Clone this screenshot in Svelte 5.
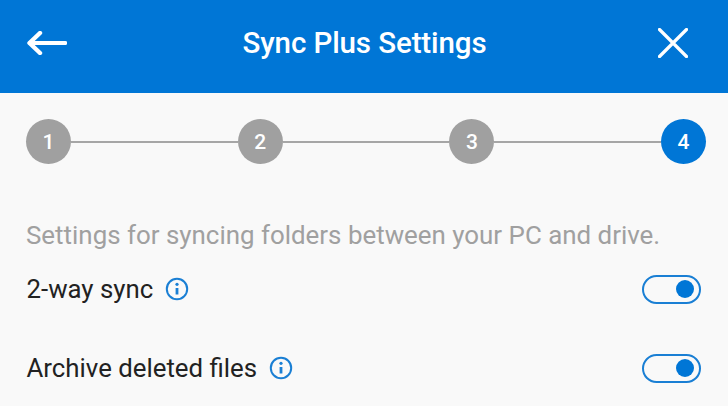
<script>
	const steps = [1, 2, 3, 4];
	const current = 4;
	const options = [
		{ label: "2-way sync", on: true },
		{ label: "Archive deleted files", on: true }
	];
</script>

<div class="panel">
	<header class="topbar">
		<button class="icon-btn" aria-label="Back">
			<svg viewBox="0 0 40 24" width="40" height="24" fill="none" stroke="#fff" stroke-width="3.8" stroke-linecap="round" stroke-linejoin="round">
				<path d="M3 12H38.5" />
				<path d="M13 2 2.5 12 13 22" stroke-width="4.4" />
			</svg>
		</button>
		<h1>Sync Plus Settings</h1>
		<button class="icon-btn" aria-label="Close">
			<svg viewBox="0 0 30 30" width="30" height="30" fill="none" stroke="#fff" stroke-width="3.2" stroke-linecap="round">
				<path d="M1.5 1.5 28.5 28.5M28.5 1.5 1.5 28.5" />
			</svg>
		</button>
	</header>

	<div class="stepper">
		{#each steps as step, i}
			{#if i > 0}<span class="line"></span>{/if}
			<span class="step" class:active={step === current}>{step}</span>
		{/each}
	</div>

	<p class="intro">Settings for syncing folders between your PC and drive.</p>

	<div class="options">
		{#each options as option}
			<div class="row">
				<span class="label">{option.label}</span>
				<svg class="info" viewBox="0 0 24 24" width="24" height="24" fill="none" stroke="#1a7fd4">
					<circle cx="12" cy="12" r="10.2" stroke-width="2" />
					<path d="M12 11v6.5" stroke-width="2.8" />
					<circle cx="12" cy="7.3" r="1.6" fill="#1a7fd4" stroke="none" />
				</svg>
				<span class="toggle" class:on={option.on}><span class="knob"></span></span>
			</div>
		{/each}
	</div>
</div>

<style>
	:global(body) {
		margin: 0;
		background: #f9f9f9;
	}

	.panel {
		width: 728px;
		height: 406px;
		overflow: hidden;
		background: #f9f9f9;
		font-family: Roboto, "Liberation Sans", sans-serif;
	}

	.topbar {
		height: 93px;
		box-sizing: border-box;
		padding: 0 40px 7px 27px;
		background: #0076d6;
		display: flex;
		align-items: center;
		justify-content: space-between;
	}
	.topbar h1 {
		margin: 0;
		padding-left: 4px;
		color: #fff;
		font-size: 29.5px;
		font-weight: 500;
		letter-spacing: -0.1px;
	}

	.icon-btn {
		padding: 0;
		background: none;
		border: none;
		display: flex;
	}

	.stepper {
		display: flex;
		align-items: center;
		padding: 26px 22px 0 26px;
	}
	.step {
		width: 45px;
		height: 45px;
		flex: none;
		border-radius: 50%;
		background: #a0a0a0;
		color: #fff;
		font-size: 21px;
		font-weight: 500;
		display: flex;
		align-items: center;
		justify-content: center;
	}
	.step.active {
		background: #0076d6;
	}
	.line {
		flex: 1;
		height: 2px;
		background: #a6a6a6;
	}

	.intro {
		margin: 0;
		padding: 56px 0 0 26px;
		color: #a0a0a0;
		font-size: 25.9px;
		line-height: 30px;
	}

	.options {
		display: flex;
		flex-direction: column;
		gap: 49px;
		padding: 24px 27px 0 26.5px;
	}
	.row {
		height: 30px;
		display: flex;
		align-items: center;
	}
	.label {
		color: #222;
		font-size: 25.8px;
		line-height: 30px;
	}
	.info {
		margin-left: 12px;
	}
	.toggle {
		margin-left: auto;
		width: 59px;
		height: 29px;
		flex: none;
		box-sizing: border-box;
		border: 2px solid #1a7fd4;
		border-radius: 15px;
		display: flex;
		align-items: center;
		padding: 0 5px;
	}
	.toggle.on {
		justify-content: flex-end;
	}
	.knob {
		width: 18px;
		height: 18px;
		border-radius: 50%;
		background: #0076d6;
	}
</style>
